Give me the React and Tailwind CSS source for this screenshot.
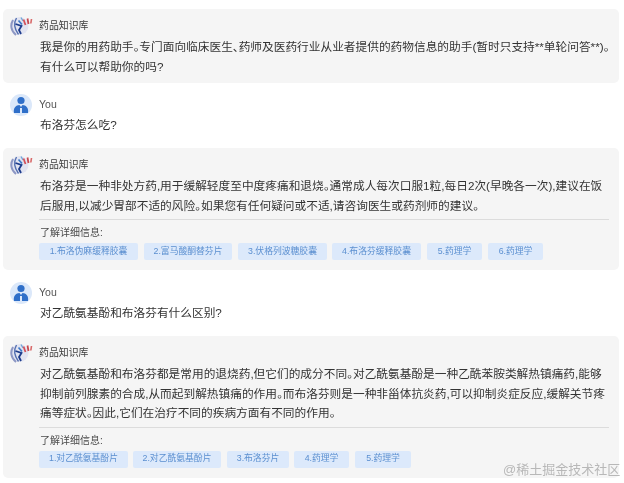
const FONT = "font-['Liberation_Sans','Noto_Sans_CJK_SC',sans-serif]";

function Logo() {
  return (
    <svg width="23" height="20" viewBox="0 0 23 20" className="shrink-0">
      <circle cx="9.5" cy="10" r="9" fill="#e2e4f1" />
      <path d="M3 4C0 9 1 15 6 19" stroke="#8d97c4" strokeWidth="2" fill="none" />
      <path d="M6.5 2C3.5 7 4.5 13 8.5 18.5" stroke="#5570b0" strokeWidth="1.4" fill="none" />
      <path d="M5.5 8L11.5 10L9 14L11 18" stroke="#1d3c8c" strokeWidth="1.8" fill="none" />
      <path d="M8.5 4.5L12 8.5" stroke="#3a78c8" strokeWidth="1.6" fill="none" />
      <path d="M11 1.5L13 5" stroke="#6fa5d8" strokeWidth="1.3" fill="none" />
      <path d="M13.5 3.5L15.5 9" stroke="#d2505a" strokeWidth="1.8" fill="none" />
      <path d="M17.5 2.5L18.5 8" stroke="#c8484f" strokeWidth="1.8" fill="none" />
      <path d="M21.5 3L20.8 7.5" stroke="#d86a6a" strokeWidth="1.6" fill="none" />
    </svg>
  );
}

function UserAvatar() {
  return (
    <div className="flex h-[22px] w-[22px] shrink-0 items-center justify-center rounded-full bg-[#dbe8fa]">
      <svg width="16" height="18" viewBox="0 0 16 18">
        <circle cx="8" cy="4.5" r="3.6" fill="#2f6fc9" />
        <path d="M1 17C0 12 3 9 6.5 9L8 11L9.5 9C13 9 16 12 15 17L9 17L9 12L7 12L7 17Z" fill="#2f6fc9" />
      </svg>
    </div>
  );
}

function Header({ bot, name }) {
  return (
    <div className={"flex items-center " + (bot ? "h-[22px]" : "h-[21px]")}>
      <div className="w-[29px] shrink-0">{bot ? <Logo /> : <UserAvatar />}</div>
      <span className={bot ? "text-[9.9px] text-[#3c3c3c]" : "text-[10.5px] text-[#555]"}>{name}</span>
    </div>
  );
}

function Lines({ lines }) {
  return (
    <div className="pl-[30px] text-[11.7px] leading-[19.5px] text-[#333] whitespace-nowrap">
      {lines.map((l) => (
        <div key={l}>{l}</div>
      ))}
    </div>
  );
}

function Refs({ chips }) {
  return (
    <div className="ml-[29px] mr-[3px] mt-[4px] border-t border-[#dcdcdc] pt-[6px]">
      <div className="pl-[1px] text-[10px] leading-[14px] text-[#4a4a4a]">了解详细信息:</div>
      <div className="mt-[3px] flex">
        {chips.map((c) => (
          <span
            key={c.t}
            className="flex h-[17px] items-center justify-center rounded-[2px] bg-[#dce9fb] text-[8.8px] text-[#5b8fd0] whitespace-nowrap"
            style={{ width: c.w, marginRight: c.m }}
          >
            {c.t}
          </span>
        ))}
      </div>
    </div>
  );
}

function Bot({ lines, chips, className }) {
  return (
    <div className={"rounded-[5px] bg-[#f5f5f5] pl-[7px] pr-[7px] " + className}>
      <Header bot name="药品知识库" />
      <Lines lines={lines} />
      {chips && <Refs chips={chips} />}
    </div>
  );
}

function User({ text, className }) {
  return (
    <div className={"pl-[7px] " + className}>
      <Header name="You" />
      <Lines lines={[text]} />
    </div>
  );
}

export default function App() {
  return (
    <div className={"relative h-[483px] w-[624px] overflow-hidden bg-white pl-[3px] pr-[5px] pt-[9px] blur-[0.4px] [font-feature-settings:'palt'] " + FONT}>
      <Bot
        className="h-[74px] pt-[6px]"
        lines={[
          "我是你的用药助手。专门面向临床医生、药师及医药行业从业者提供的药物信息的助手(暂时只支持**单轮问答**)。",
          "有什么可以帮助你的吗?",
        ]}
      />
      <User className="h-[65px] pt-[11px]" text="布洛芬怎么吃?" />
      <Bot
        className="h-[122px] pt-[6px]"
        lines={[
          "布洛芬是一种非处方药,用于缓解轻度至中度疼痛和退烧。通常成人每次口服1粒,每日2次(早晚各一次),建议在饭",
          "后服用,以减少胃部不适的风险。如果您有任何疑问或不适,请咨询医生或药剂师的建议。",
        ]}
        chips={[
          { t: "1.布洛伪麻缓释胶囊", w: 99, m: 6 },
          { t: "2.富马酸酮替芬片", w: 88, m: 6 },
          { t: "3.伏格列波糖胶囊", w: 89, m: 5 },
          { t: "4.布洛芬缓释胶囊", w: 89, m: 6 },
          { t: "5.药理学", w: 55, m: 6 },
          { t: "6.药理学", w: 55, m: 0 },
        ]}
      />
      <User className="h-[66px] pt-[12px]" text="对乙酰氨基酚和布洛芬有什么区别?" />
      <Bot
        className="h-[142px] pt-[6px]"
        lines={[
          "对乙酰氨基酚和布洛芬都是常用的退烧药,但它们的成分不同。对乙酰氨基酚是一种乙酰苯胺类解热镇痛药,能够",
          "抑制前列腺素的合成,从而起到解热镇痛的作用。而布洛芬则是一种非甾体抗炎药,可以抑制炎症反应,缓解关节疼",
          "痛等症状。因此,它们在治疗不同的疾病方面有不同的作用。",
        ]}
        chips={[
          { t: "1.对乙酰氨基酚片", w: 89, m: 5 },
          { t: "2.对乙酰氨基酚片", w: 88, m: 6 },
          { t: "3.布洛芬片", w: 62, m: 5 },
          { t: "4.药理学", w: 55, m: 6 },
          { t: "5.药理学", w: 56, m: 0 },
        ]}
      />
      <div className="absolute left-[503px] top-[462px] text-[13px] leading-[16px] text-[#b8b8b8] whitespace-nowrap">
        @稀土掘金技术社区
      </div>
    </div>
  );
}
